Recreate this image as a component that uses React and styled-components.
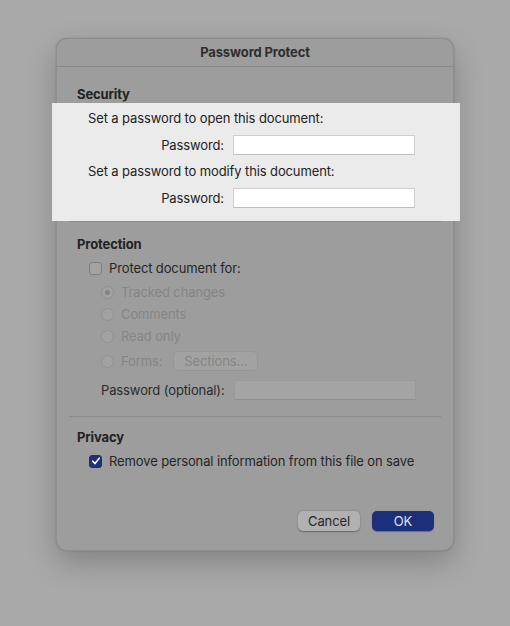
import React from "react";
import styled, { createGlobalStyle } from "styled-components";

const Global = createGlobalStyle`
  html, body {
    margin: 0;
    padding: 0;
  }
  body {
    width: 510px;
    height: 626px;
    background: #a9a9a9;
    font-family: Inter, "Liberation Sans", sans-serif;
    font-size: 13px;
    letter-spacing: -0.12px;
    color: #242424;
    overflow: hidden;
  }
`;

const Page = styled.div`
  width: 510px;
  height: 626px;
  padding-top: 38px;
  box-sizing: border-box;
  display: flex;
  justify-content: center;
`;

const Dialog = styled.div`
  width: 398px;
  height: 513px;
  box-sizing: border-box;
  background: #9d9d9d;
  border: 1px solid #8e8e8e;
  border-radius: 11px;
  box-shadow: 0 12px 30px rgba(0, 0, 0, 0.22), 0 0 2px rgba(0, 0, 0, 0.2);
  display: flex;
  flex-direction: column;
`;

const TitleBar = styled.div`
  height: 28px;
  box-sizing: border-box;
  border-bottom: 1px solid #878787;
  display: flex;
  align-items: center;
  justify-content: center;
  font-weight: 700;
  color: #2e2e2e;
  padding-bottom: 2px;
`;

const Body = styled.div`
  padding: 19px 12px 0 12px;
  display: flex;
  flex-direction: column;
`;

const SectionTitle = styled.div`
  font-weight: 700;
  line-height: 16px;
  padding-left: 8px;
  color: #222;
  margin-top: ${(p) => p.$top || 0}px;
`;

const Spotlight = styled.div`
  margin: 1px -19px 0 -17px;
  background: #ebebeb;
  padding: 7px 0 13px 36px;
  display: flex;
  flex-direction: column;
  color: #222;
`;

const Line = styled.div`
  line-height: 16px;
  height: 16px;
  margin-top: ${(p) => p.$top || 0}px;
`;

const FieldRow = styled.div`
  display: flex;
  align-items: center;
  height: 20px;
  margin-top: ${(p) => p.$top || 0}px;
  padding-left: ${(p) => p.$indent || 0}px;
`;

const FieldLabel = styled.div`
  width: ${(p) => p.$width}px;
  box-sizing: border-box;
  text-align: ${(p) => (p.$left ? "left" : "right")};
  padding-right: 9px;
  white-space: nowrap;
`;

const TextBox = styled.div`
  width: 182px;
  height: 20px;
  box-sizing: border-box;
  background: ${(p) => (p.$disabled ? "#a4a4a4" : "#ffffff")};
  border: 1px solid ${(p) => (p.$disabled ? "#999" : "#cfcfcf")};
  border-bottom-color: ${(p) => (p.$disabled ? "#8f8f8f" : "#bdbdbd")};
`;

const Separator = styled.div`
  height: 1px;
  background: #8a8a8a;
  margin-top: ${(p) => p.$top || 0}px;
`;

const CheckRow = styled.div`
  display: flex;
  align-items: center;
  gap: 7px;
  height: 16px;
  margin-top: ${(p) => p.$top || 0}px;
  padding-left: 20px;
  color: #262626;
`;

const Box = styled.div`
  width: 13px;
  height: 13px;
  border-radius: 3px;
  box-sizing: border-box;
  background: ${(p) => (p.$checked ? "#1d307a" : "#a3a3a3")};
  border: 1px solid ${(p) => (p.$checked ? "#1d307a" : "#7e7e7e")};
  display: flex;
  align-items: center;
  justify-content: center;
`;

const RadioRow = styled.div`
  display: flex;
  align-items: center;
  gap: 7px;
  height: ${(p) => p.$h || 16}px;
  margin-top: ${(p) => p.$top || 0}px;
  padding-left: 32px;
  color: #858585;
`;

const Radio = styled.div`
  width: 13px;
  height: 13px;
  border-radius: 50%;
  box-sizing: border-box;
  border: 1px solid #919191;
  background: #a2a2a2;
  display: flex;
  align-items: center;
  justify-content: center;
  &::after {
    content: "";
    width: 5px;
    height: 5px;
    border-radius: 50%;
    background: ${(p) => (p.$on ? "#838383" : "transparent")};
  }
`;

const SmallButton = styled.div`
  margin-left: 4px;
  width: 85px;
  height: 20px;
  box-sizing: border-box;
  border-radius: 5px;
  background: #a2a2a2;
  border: 1px solid #969696;
  display: flex;
  align-items: center;
  justify-content: center;
  color: #858585;
`;

const Footer = styled.div`
  margin-top: auto;
  padding: 0 19px 19px 0;
  display: flex;
  justify-content: flex-end;
  gap: 12px;
`;

const Button = styled.div`
  width: 62px;
  height: 20px;
  box-sizing: border-box;
  border-radius: 5px;
  display: flex;
  align-items: center;
  justify-content: center;
  background: ${(p) => (p.$primary ? "#1c2f7b" : "#b1b1b1")};
  color: ${(p) => (p.$primary ? "#dfe3ee" : "#262626")};
  box-shadow: ${(p) =>
    p.$primary ? "0 0.5px 1px rgba(0,0,0,0.3)" : "0 0.5px 1.5px rgba(0,0,0,0.35)"};
`;

const Check = () => (
  <svg width="10" height="10" viewBox="0 0 10 10">
    <path d="M1.8 5.2 L4 7.6 L8.3 2.2" fill="none" stroke="#fff" strokeWidth="1.6" strokeLinecap="round" strokeLinejoin="round" />
  </svg>
);

export default function App() {
  return (
    <>
      <Global />
      <Page>
        <Dialog>
          <TitleBar>Password Protect</TitleBar>
          <Body>
            <SectionTitle>Security</SectionTitle>
            <Spotlight>
              <Line>Set a password to open this document:</Line>
              <FieldRow $top={9}>
                <FieldLabel $width={145}>Password:</FieldLabel>
                <TextBox />
              </FieldRow>
              <Line $top={8}>Set a password to modify this document:</Line>
              <FieldRow $top={9}>
                <FieldLabel $width={145}>Password:</FieldLabel>
                <TextBox />
              </FieldRow>
            </Spotlight>
            <Separator />
            <SectionTitle $top={14}>Protection</SectionTitle>
            <CheckRow $top={8}>
              <Box />
              Protect document for:
            </CheckRow>
            <RadioRow $top={8}>
              <Radio $on />
              Tracked changes
            </RadioRow>
            <RadioRow $top={6}>
              <Radio />
              Comments
            </RadioRow>
            <RadioRow $top={6}>
              <Radio />
              Read only
            </RadioRow>
            <RadioRow $top={7} $h={20}>
              <Radio />
              Forms:
              <SmallButton>Sections...</SmallButton>
            </RadioRow>
            <FieldRow $top={9} $indent={32}>
              <FieldLabel $width={133} $left style={{ color: "#2b2b2b" }}>
                Password (optional):
              </FieldLabel>
              <TextBox $disabled />
            </FieldRow>
            <Separator $top={16} />
            <SectionTitle $top={12}>Privacy</SectionTitle>
            <CheckRow $top={8}>
              <Box $checked>
                <Check />
              </Box>
              Remove personal information from this file on save
            </CheckRow>
          </Body>
          <Footer>
            <Button>Cancel</Button>
            <Button $primary>OK</Button>
          </Footer>
        </Dialog>
      </Page>
    </>
  );
}
